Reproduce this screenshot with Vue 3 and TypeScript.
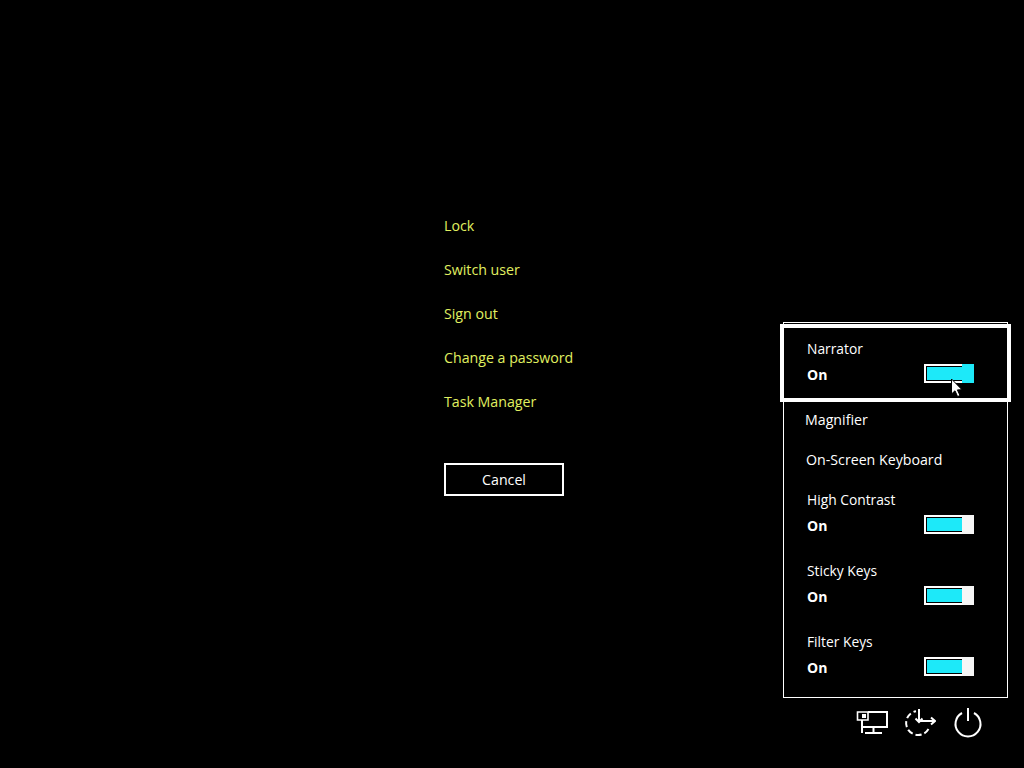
<script setup lang="ts">
interface Setting {
  name: string
  kind: 'plain' | 'switch'
  cls?: string
}

const links: string[] = ['Lock', 'Switch user', 'Sign out', 'Change a password', 'Task Manager']

const settings: Setting[] = [
  { name: 'Magnifier', kind: 'plain', cls: 'indent-a' },
  { name: 'On-Screen Keyboard', kind: 'plain', cls: 'indent-b' },
  { name: 'High Contrast', kind: 'switch' },
  { name: 'Sticky Keys', kind: 'switch' },
  { name: 'Filter Keys', kind: 'switch' }
]
</script>

<template>
  <div class="screen">
    <div class="menu">
      <a v-for="link in links" :key="link" class="menu-link">{{ link }}</a>
      <button class="cancel">Cancel</button>
    </div>

    <div class="side">
      <div class="panel">
        <div class="focus-row">
          <div class="row-name">Narrator</div>
          <div class="row-state">
            <span>On</span>
            <span class="toggle hover">
              <svg class="pointer" width="14" height="20" viewBox="0 0 14 20">
                <path d="M1.5 1 V16 L5 12.8 L7.6 18.6 L10 17.5 L7.4 11.9 L12 11.7 Z" fill="#fff" stroke="#000" stroke-width="1" />
              </svg>
            </span>
          </div>
        </div>
        <div v-for="item in settings" :key="item.name" class="row" :class="[item.kind, item.cls]">
          <div class="row-name">{{ item.name }}</div>
          <div v-if="item.kind === 'switch'" class="row-state">
            <span>On</span>
            <span class="toggle"></span>
          </div>
        </div>
      </div>

      <div class="tray">
        <svg width="32" height="32" viewBox="0 0 32 32" fill="none" stroke="#fff" stroke-width="2">
          <path d="M12 6 H31 V21 H6 M6 14 V27 M17.5 21 V27 M9 27 H26" />
          <path d="M1.5 6 H12 V14 H1.5 Z" stroke-width="1.6" />
          <rect x="6" y="8" width="4" height="4" fill="#fff" stroke="none" />
        </svg>
        <svg width="32" height="32" viewBox="0 0 32 32" fill="none" stroke="#fff" stroke-width="2">
          <path d="M24.5 23 A12 12 0 1 1 12 5.2" stroke-dasharray="6 3" />
          <path d="M15 3 V16 M11.5 12.5 L15 16 L18.5 12.5 M15 15 H31 M27 11.5 L31 15 L27 18.5" />
        </svg>
        <svg width="32" height="32" viewBox="0 0 32 32" fill="none" stroke="#fff" stroke-width="2">
          <path d="M16 2 V15" />
          <path d="M10 7 A12.5 12.5 0 1 0 22 7" />
        </svg>
      </div>
    </div>
  </div>
</template>

<style scoped>
.screen {
  display: flex;
  height: 768px;
  overflow: hidden;
  background: #000;
  color: #fff;
  font-family: "Open Sans", "Liberation Sans", sans-serif;
  font-size: 14.2px;
}

.menu {
  display: flex;
  flex-direction: column;
  align-items: flex-start;
  margin-left: 444px;
  padding-top: 204px;
}

.menu-link {
  line-height: 44px;
  color: #e0f060;
  cursor: pointer;
}

.cancel {
  box-sizing: border-box;
  width: 120px;
  height: 33px;
  margin-top: 39px;
  padding: 0;
  border: 2px solid #fff;
  background: #000;
  color: #fff;
  font: inherit;
}

.side {
  margin-left: auto;
  margin-right: 16px;
  padding-top: 322px;
  width: 225px;
}

.panel {
  box-sizing: border-box;
  height: 376px;
  border: 1px solid #fff;
}

.focus-row {
  box-sizing: border-box;
  height: 78px;
  margin: 1px -4px 0;
  padding: 8px 33px 0 23px;
  border: 4px solid #fff;
  background: #000;
}

.row {
  padding: 5px 33px 16px 23px;
}

.row.plain {
  padding-bottom: 9px;
}

.indent-a {
  padding-left: 21px;
}

.indent-b {
  padding-left: 22px;
}

.row-name {
  line-height: 26px;
}

.focus-row .row-name,
.switch .row-name {
  font-size: 13.8px;
}

.row-state {
  display: flex;
  justify-content: space-between;
  align-items: center;
  height: 24px;
  font-size: 14px;
  font-weight: 700;
}

.toggle {
  position: relative;
  align-self: flex-start;
  box-sizing: border-box;
  width: 50px;
  height: 19px;
  margin-top: 2px;
  border: 2px solid #fff;
  background: #1de9f9;
  box-shadow: inset 0 0 0 1px #000;
}

.toggle::after {
  content: "";
  position: absolute;
  top: -2px;
  right: -2px;
  bottom: -2px;
  width: 12px;
  background: #f6f6f6;
}

.toggle.hover::after {
  background: #1de9f9;
}

.pointer {
  position: absolute;
  z-index: 1;
  left: 24px;
  top: 12px;
}

.tray {
  display: flex;
  justify-content: flex-end;
  gap: 16px;
  padding: 8px 24px 0 0;
}
</style>
